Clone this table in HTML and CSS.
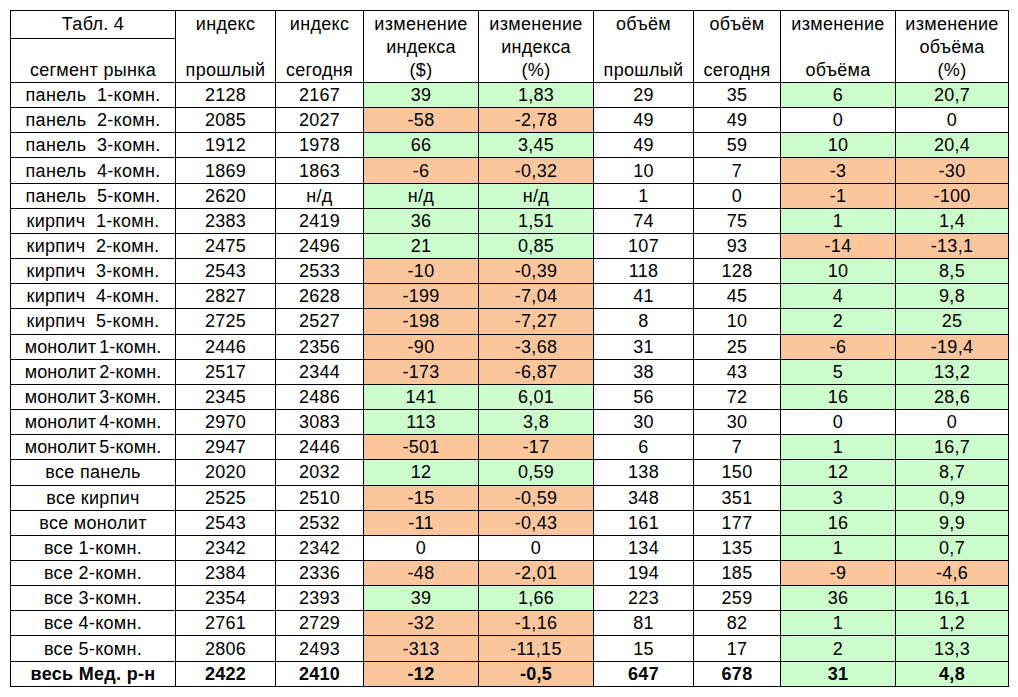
FILE: index.html
```html
<!DOCTYPE html>
<html lang="ru">
<head>
<meta charset="utf-8">
<title>Табл. 4</title>
<link rel="stylesheet" href="styles.css">
</head>
<body>
<table class="grid">
<colgroup>
<col class="c1"><col class="c2"><col class="c3"><col class="c4"><col class="c5"><col class="c6"><col class="c7"><col class="c8"><col class="c9">
</colgroup>
<thead>
<tr class="h1">
<th class="title">Табл. 4</th>
<th rowspan="2" class="hd">индекс<br>&nbsp;<br>прошлый</th>
<th rowspan="2" class="hd">индекс<br>&nbsp;<br>сегодня</th>
<th rowspan="2" class="hd">изменение<br>индекса<br>($)</th>
<th rowspan="2" class="hd">изменение<br>индекса<br>(%)</th>
<th rowspan="2" class="hd">объём<br>&nbsp;<br>прошлый</th>
<th rowspan="2" class="hd">объём<br>&nbsp;<br>сегодня</th>
<th rowspan="2" class="hd">изменение<br>&nbsp;<br>объёма</th>
<th rowspan="2" class="hd">изменение<br>объёма<br>(%)</th>
</tr>
<tr class="h2"><th class="seg">сегмент рынка</th></tr>
</thead>
<tbody>
<tr><td class="lbl">панель  1-комн.</td><td>2128</td><td>2167</td><td class="g">39</td><td class="g">1,83</td><td>29</td><td>35</td><td class="g">6</td><td class="g">20,7</td></tr>
<tr><td class="lbl">панель  2-комн.</td><td>2085</td><td>2027</td><td class="o">-58</td><td class="o">-2,78</td><td>49</td><td>49</td><td>0</td><td>0</td></tr>
<tr><td class="lbl">панель  3-комн.</td><td>1912</td><td>1978</td><td class="g">66</td><td class="g">3,45</td><td>49</td><td>59</td><td class="g">10</td><td class="g">20,4</td></tr>
<tr><td class="lbl">панель  4-комн.</td><td>1869</td><td>1863</td><td class="o">-6</td><td class="o">-0,32</td><td>10</td><td>7</td><td class="o">-3</td><td class="o">-30</td></tr>
<tr><td class="lbl">панель  5-комн.</td><td>2620</td><td>н/д</td><td class="g">н/д</td><td class="g">н/д</td><td>1</td><td>0</td><td class="o">-1</td><td class="o">-100</td></tr>
<tr><td class="lbl">кирпич  1-комн.</td><td>2383</td><td>2419</td><td class="g">36</td><td class="g">1,51</td><td>74</td><td>75</td><td class="g">1</td><td class="g">1,4</td></tr>
<tr><td class="lbl">кирпич  2-комн.</td><td>2475</td><td>2496</td><td class="g">21</td><td class="g">0,85</td><td>107</td><td>93</td><td class="o">-14</td><td class="o">-13,1</td></tr>
<tr><td class="lbl">кирпич  3-комн.</td><td>2543</td><td>2533</td><td class="o">-10</td><td class="o">-0,39</td><td>118</td><td>128</td><td class="g">10</td><td class="g">8,5</td></tr>
<tr><td class="lbl">кирпич  4-комн.</td><td>2827</td><td>2628</td><td class="o">-199</td><td class="o">-7,04</td><td>41</td><td>45</td><td class="g">4</td><td class="g">9,8</td></tr>
<tr><td class="lbl">кирпич  5-комн.</td><td>2725</td><td>2527</td><td class="o">-198</td><td class="o">-7,27</td><td>8</td><td>10</td><td class="g">2</td><td class="g">25</td></tr>
<tr><td class="lbl tight">монолит 1-комн.</td><td>2446</td><td>2356</td><td class="o">-90</td><td class="o">-3,68</td><td>31</td><td>25</td><td class="o">-6</td><td class="o">-19,4</td></tr>
<tr><td class="lbl tight">монолит 2-комн.</td><td>2517</td><td>2344</td><td class="o">-173</td><td class="o">-6,87</td><td>38</td><td>43</td><td class="g">5</td><td class="g">13,2</td></tr>
<tr><td class="lbl tight">монолит 3-комн.</td><td>2345</td><td>2486</td><td class="g">141</td><td class="g">6,01</td><td>56</td><td>72</td><td class="g">16</td><td class="g">28,6</td></tr>
<tr><td class="lbl tight">монолит 4-комн.</td><td>2970</td><td>3083</td><td class="g">113</td><td class="g">3,8</td><td>30</td><td>30</td><td>0</td><td>0</td></tr>
<tr><td class="lbl tight">монолит 5-комн.</td><td>2947</td><td>2446</td><td class="o">-501</td><td class="o">-17</td><td>6</td><td>7</td><td class="g">1</td><td class="g">16,7</td></tr>
<tr><td class="lbl">все панель</td><td>2020</td><td>2032</td><td class="g">12</td><td class="g">0,59</td><td>138</td><td>150</td><td class="g">12</td><td class="g">8,7</td></tr>
<tr><td class="lbl">все кирпич</td><td>2525</td><td>2510</td><td class="o">-15</td><td class="o">-0,59</td><td>348</td><td>351</td><td class="g">3</td><td class="g">0,9</td></tr>
<tr><td class="lbl">все монолит</td><td>2543</td><td>2532</td><td class="o">-11</td><td class="o">-0,43</td><td>161</td><td>177</td><td class="g">16</td><td class="g">9,9</td></tr>
<tr><td class="lbl">все 1-комн.</td><td>2342</td><td>2342</td><td>0</td><td>0</td><td>134</td><td>135</td><td class="g">1</td><td class="g">0,7</td></tr>
<tr><td class="lbl">все 2-комн.</td><td>2384</td><td>2336</td><td class="o">-48</td><td class="o">-2,01</td><td>194</td><td>185</td><td class="o">-9</td><td class="o">-4,6</td></tr>
<tr><td class="lbl">все 3-комн.</td><td>2354</td><td>2393</td><td class="g">39</td><td class="g">1,66</td><td>223</td><td>259</td><td class="g">36</td><td class="g">16,1</td></tr>
<tr><td class="lbl">все 4-комн.</td><td>2761</td><td>2729</td><td class="o">-32</td><td class="o">-1,16</td><td>81</td><td>82</td><td class="g">1</td><td class="g">1,2</td></tr>
<tr><td class="lbl">все 5-комн.</td><td>2806</td><td>2493</td><td class="o">-313</td><td class="o">-11,15</td><td>15</td><td>17</td><td class="g">2</td><td class="g">13,3</td></tr>
<tr class="total"><td class="lbl">весь Мед. р-н</td><td>2422</td><td>2410</td><td class="o">-12</td><td class="o">-0,5</td><td>647</td><td>678</td><td class="g">31</td><td class="g">4,8</td></tr>
</tbody>
</table>
</body>
</html>
```
FILE: styles.css
```css
html, body {
  margin: 0;
  padding: 0;
  background: #ffffff;
}
body {
  padding: 10px 0 0 10px;
  font-family: "Liberation Sans", Arial, sans-serif;
  font-size: 18px;
  color: #000;
}
.grid {
  border-collapse: collapse;
  table-layout: fixed;
  width: 998px;
  letter-spacing: 0.3px;
}
.c1 { width: 165px; }
.c2 { width: 100px; }
.c3 { width: 88px; }
.c4 { width: 115px; }
.c5 { width: 115px; }
.c6 { width: 100px; }
.c7 { width: 87px; }
.c8 { width: 115px; }
.c9 { width: 113px; }
.grid th, .grid td {
  border: 1px solid #000;
  padding: 0;
  text-align: center;
  font-weight: normal;
  white-space: pre;
  overflow: hidden;
}
.grid th.hd {
  vertical-align: bottom;
  line-height: 23px;
  white-space: normal;
}
.h1 { height: 28px; }
.h2 { height: 44px; }
.title { line-height: 27px; vertical-align: middle; }
.seg { vertical-align: bottom; line-height: 23px; }
.grid tbody tr { height: 25.17px; }
.grid td { line-height: 24px; vertical-align: middle; }
.tight { word-spacing: -2px; letter-spacing: 0.1px; }
.g { background: #ccfccc; }
.o { background: #fbc69c; }
.total td { font-weight: bold; }
```
